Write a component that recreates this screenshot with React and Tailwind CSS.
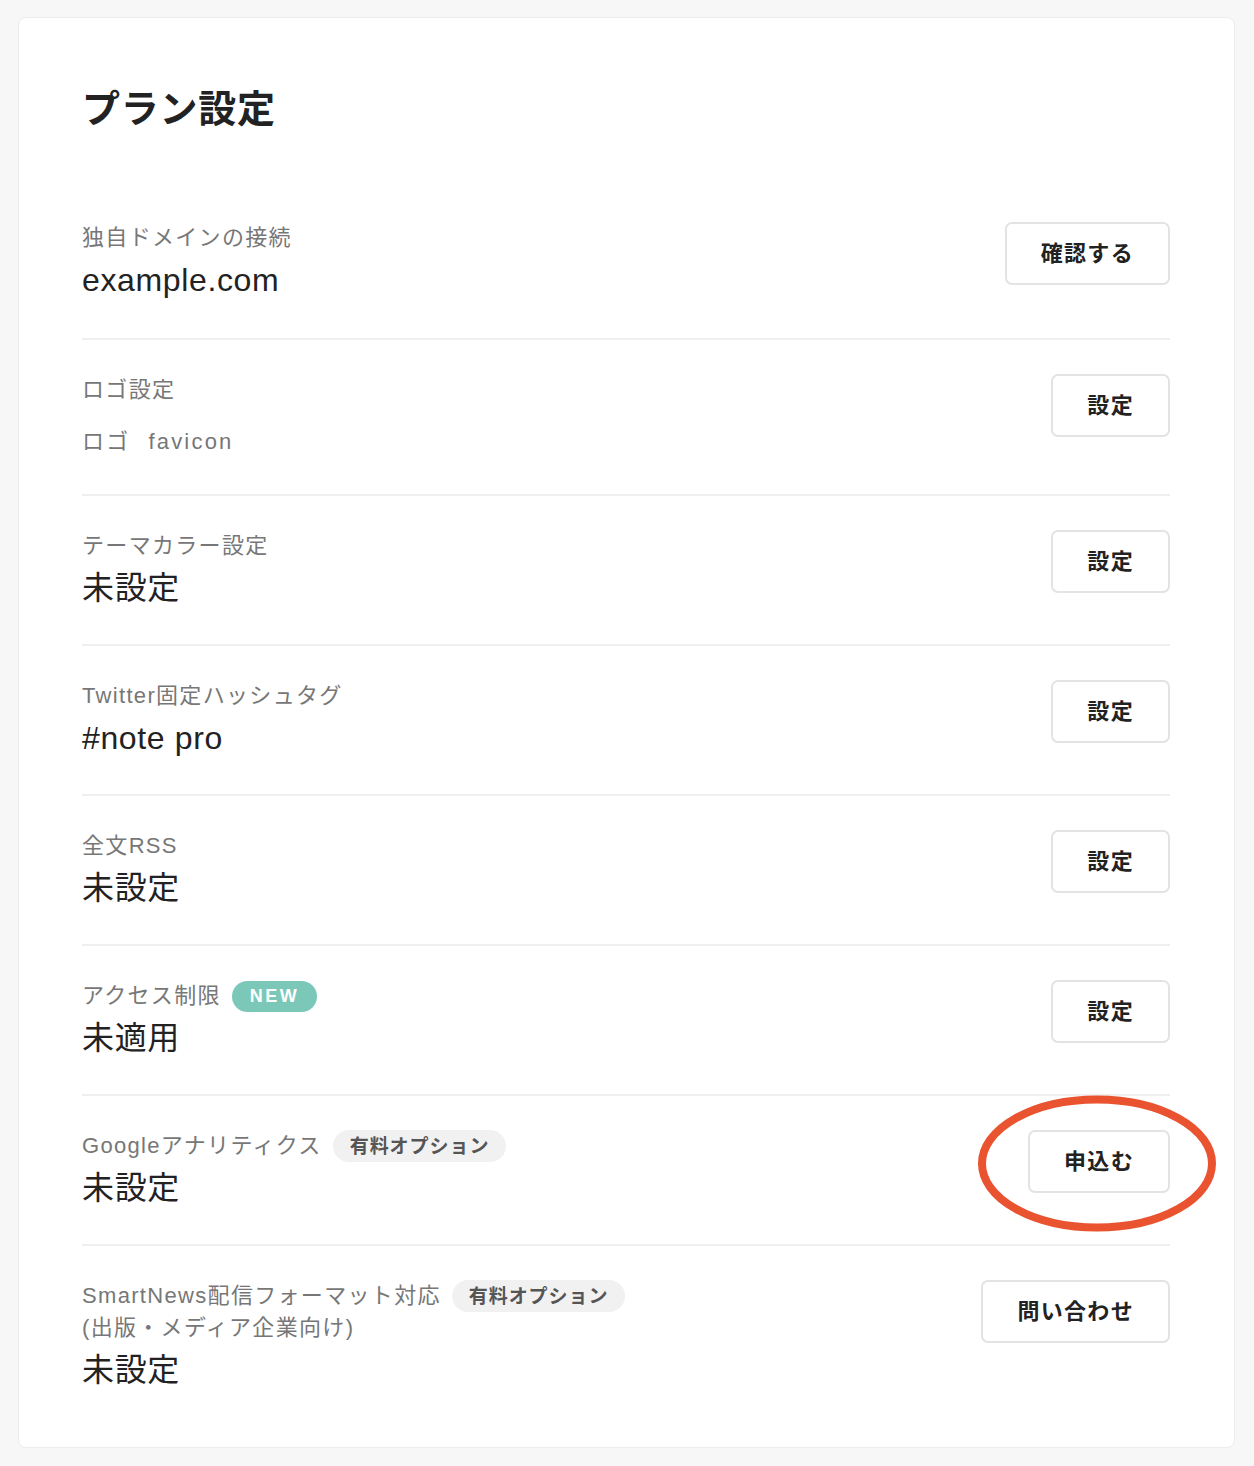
const FONT = "font-['Liberation_Sans','Noto_Sans_CJK_JP',sans-serif]";

const ROWS = [
  { label: '独自ドメインの接続', value: 'example.com', button: '確認する', pb: 'pb-[36px]' },
  { label: 'ロゴ設定', logo: true, button: '設定', pb: 'pb-[36px]' },
  { label: 'テーマカラー設定', value: '未設定', button: '設定' },
  { label: 'Twitter固定ハッシュタグ', value: '#note pro', button: '設定' },
  { label: '全文RSS', value: '未設定', button: '設定' },
  { label: 'アクセス制限', badge: 'new', value: '未適用', button: '設定' },
  { label: 'Googleアナリティクス', badge: 'paid', value: '未設定', button: '申込む', circled: true },
  {
    label: 'SmartNews配信フォーマット対応',
    sub: '(出版・メディア企業向け)',
    badge: 'paid',
    value: '未設定',
    button: '問い合わせ',
  },
]

function Badge({ type }) {
  if (type === 'new') {
    return (
      <span className="ml-[11px] inline-flex h-[31px] items-center rounded-full bg-[#7bc8b8] px-[18px] text-[18px] font-bold leading-none tracking-[0.14em] text-white">
        NEW
      </span>
    )
  }
  return (
    <span className="ml-[11px] inline-flex h-[32px] items-center rounded-full bg-[#f1f1f1] px-[17px] text-[19px] font-bold leading-none tracking-[0.05em] text-[#555]">
      有料オプション
    </span>
  )
}

function Row({ row, first }) {
  return (
    <div className={`flex items-start justify-between pt-[34px] ${row.pb || 'pb-[34px]'} ${first ? '' : 'border-t-2 border-[#efefef]'}`}>
      <div className="flex flex-col">
        <div className="flex items-center text-[22px] leading-[32px] tracking-[0.06em] text-[#777]">
          <span>{row.label}</span>
          {row.badge && <Badge type={row.badge} />}
        </div>
        {row.sub && <div className="text-[22px] leading-[32px] tracking-[0.06em] text-[#777]">{row.sub}</div>}
        {row.logo ? (
          <div className="mt-[20px] flex gap-[18px] text-[22px] leading-[32px] tracking-[0.1em] text-[#777]">
            <span>ロゴ</span>
            <span>favicon</span>
          </div>
        ) : (
          <div className="mt-[4px] text-[32px] leading-[44px] tracking-[0.02em] text-[#222]">{row.value}</div>
        )}
      </div>
      <div className="relative">
        <button className="h-[63px] rounded-[7px] border-2 border-[#e3e3e3] bg-white px-[34px] text-[22px] font-bold tracking-[0.06em] text-[#222]">
          {row.button}
        </button>
        {row.circled && (
          <svg className="pointer-events-none absolute left-[-51px] top-[-35px]" width="240" height="137" viewBox="0 0 240 137">
            <ellipse cx="120" cy="68.5" rx="115" ry="64" fill="none" stroke="#e9532f" strokeWidth="8" />
          </svg>
        )}
      </div>
    </div>
  )
}

export default function App() {
  return (
    <div className={`min-h-[1466px] bg-[#f6f7f6] pt-[17px] pr-[19px] pb-[20px] pl-[18px] ${FONT}`}>
      <div className="rounded-[8px] border border-[#ececec] bg-white pt-[63px] pr-[64px] pb-[21px] pl-[63px]">
        <h1 className="mb-[50px] text-[38px] font-bold leading-[57px] tracking-[0.02em] text-[#222]">プラン設定</h1>
        {ROWS.map((row, i) => (
          <Row key={i} row={row} first={i === 0} />
        ))}
      </div>
    </div>
  )
}
